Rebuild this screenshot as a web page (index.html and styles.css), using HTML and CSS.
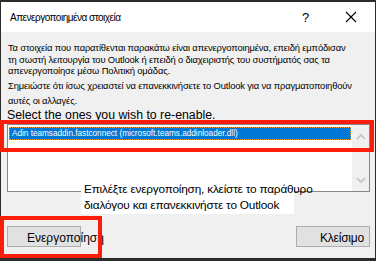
FILE: index.html
```html
<!DOCTYPE html>
<html lang="el">
    <head>
        <meta charset="UTF-8">
        <title>Απενεργοποιημένα στοιχεία</title>
        <link rel="stylesheet" href="styles.css">
    </head>
    <body>
        <div class="dialog">
            <div class="titlebar">
                <span class="title">Απενεργοποιημένα στοιχεία</span>
                <span class="help">?</span>
                <span class="close">
                    <svg width="12" height="12" viewBox="0 0 12 12"><path d="M1 1L11 11M11 1L1 11" stroke="#000" stroke-width="1.1" fill="none"/></svg>
                </span>
            </div>
            <div class="content">
                <p class="info">Τα στοιχεία που παρατίθενται παρακάτω είναι απενεργοποιημένα, επειδή εμπόδισαν<br>τη σωστή λειτουργία του Outlook ή επειδή ο διαχειριστής του συστήματός σας τα<br>απενεργοποίησε μέσω Πολιτική ομάδας.</p>
                <p class="info note">Σημειώστε ότι ίσως χρειαστεί να επανεκκινήσετε το Outlook για να πραγματοποιηθούν<br>αυτές οι αλλαγές.</p>
                <p class="select-label">Select the ones you wish to re-enable.</p>
                <div class="listbox">
                    <div class="items">
                        <div class="item selected">Adin teamsaddin.fastconnect (microsoft.teams.addinloader.dll)</div>
                    </div>
                    <div class="scrollbar">
                        <svg width="10" height="6" viewBox="0 0 10 6"><path d="M1 5L5 1L9 5" stroke="#c0c0c0" stroke-width="1.6" fill="none"/></svg>
                        <svg width="10" height="6" viewBox="0 0 10 6"><path d="M1 1L5 5L9 1" stroke="#c0c0c0" stroke-width="1.6" fill="none"/></svg>
                    </div>
                </div>
                <div class="buttons">
                    <button class="btn enable"><span>Ενεργοποίηση</span></button>
                    <button class="btn close-btn">Κλείσιμο</button>
                </div>

                <div class="tip">Επιλέξτε ενεργοποίηση, κλείστε το παράθυρο<br>διαλόγου και επανεκκινήστε το Outlook</div>
                <div class="mark mark-list"></div>
                <div class="mark mark-button"></div>
            </div>
        </div>
    </body>
</html>
```

FILE: styles.css
```css
*{
    margin: 0;
    padding: 0;
    box-sizing: border-box;
}

body{
    width: 376px;
    height: 261px;
    overflow: hidden;
    font-family: "Liberation Sans", Arial, sans-serif;
    background-color: #2b2b2b;
}

.dialog{
    display: flex;
    flex-direction: column;
    width: 376px;
    height: 261px;
    padding: 2px 1px 3px 1px;
}

.titlebar{
    display: flex;
    align-items: center;
    height: 30px;
    background-color: white;
    padding-left: 9px;
}

.title{
    flex: 1;
    font-size: 10px;
    letter-spacing: -0.5px;
    color: #000;
}

.help{
    font-size: 13px;
    width: 45px;
    text-align: center;
}

.close{
    display: flex;
    justify-content: center;
    width: 45px;
    margin-right: 2px;
}

.content{
    position: relative;
    flex: 1;
    background-color: #f0f0f0;
    padding: 10px 5px 0 6px;
}

.info{
    font-size: 9.4px;
    line-height: 11.7px;
    letter-spacing: -0.15px;
    white-space: nowrap;
    color: #000;
    padding-left: 1px;
}

.note{
    margin-top: 1px;
    line-height: 15px;
}

.select-label{
    font-size: 12.3px;
    line-height: 14px;
    color: #000;
}

.listbox{
    display: flex;
    height: 68px;
    margin-top: 2px;
    border: 1px solid #828790;
    background-color: white;
}

.items{
    flex: 1;
    padding: 2px 1px;
}

.item{
    font-size: 8.2px;
    height: 13px;
    line-height: 13px;
    padding-left: 3px;
    white-space: nowrap;
}

.selected{
    background-color: #0078d7;
    color: white;
    outline: 1px dotted #f0a030;
    outline-offset: -1px;
}

.scrollbar{
    display: flex;
    flex-direction: column;
    justify-content: space-between;
    align-items: center;
    width: 17px;
    padding: 9px 0 8px 0;
    background-color: #f0f0f0;
}

.buttons{
    display: flex;
    justify-content: space-between;
    margin-top: 34px;
}

.btn{
    width: 74px;
    height: 21px;
    background-color: #e1e1e1;
    border: 1px solid #adadad;
    font-family: "Liberation Sans", Arial, sans-serif;
    font-size: 12px;
    color: #000;
}

.enable{
    position: relative;
    text-align: left;
}

.enable span{
    position: absolute;
    left: 19px;
    top: 4px;
    white-space: nowrap;
}

.close-btn{
    text-align: right;
    padding-right: 5px;
    padding-top: 3px;
    letter-spacing: -0.2px;
}

.tip{
    position: absolute;
    left: 80px;
    top: 148px;
    width: 213px;
    padding: 1px 3px;
    background-color: white;
    font-size: 11.8px;
    line-height: 16px;
    letter-spacing: -0.2px;
    white-space: nowrap;
    color: #000;
}

.mark{
    position: absolute;
    border: 4px solid #fa1e0a;
}

.mark-list{
    left: -1px;
    top: 88px;
    width: 374px;
    height: 32px;
}

.mark-button{
    left: -1px;
    top: 184px;
    width: 102px;
    height: 42px;
}
```
